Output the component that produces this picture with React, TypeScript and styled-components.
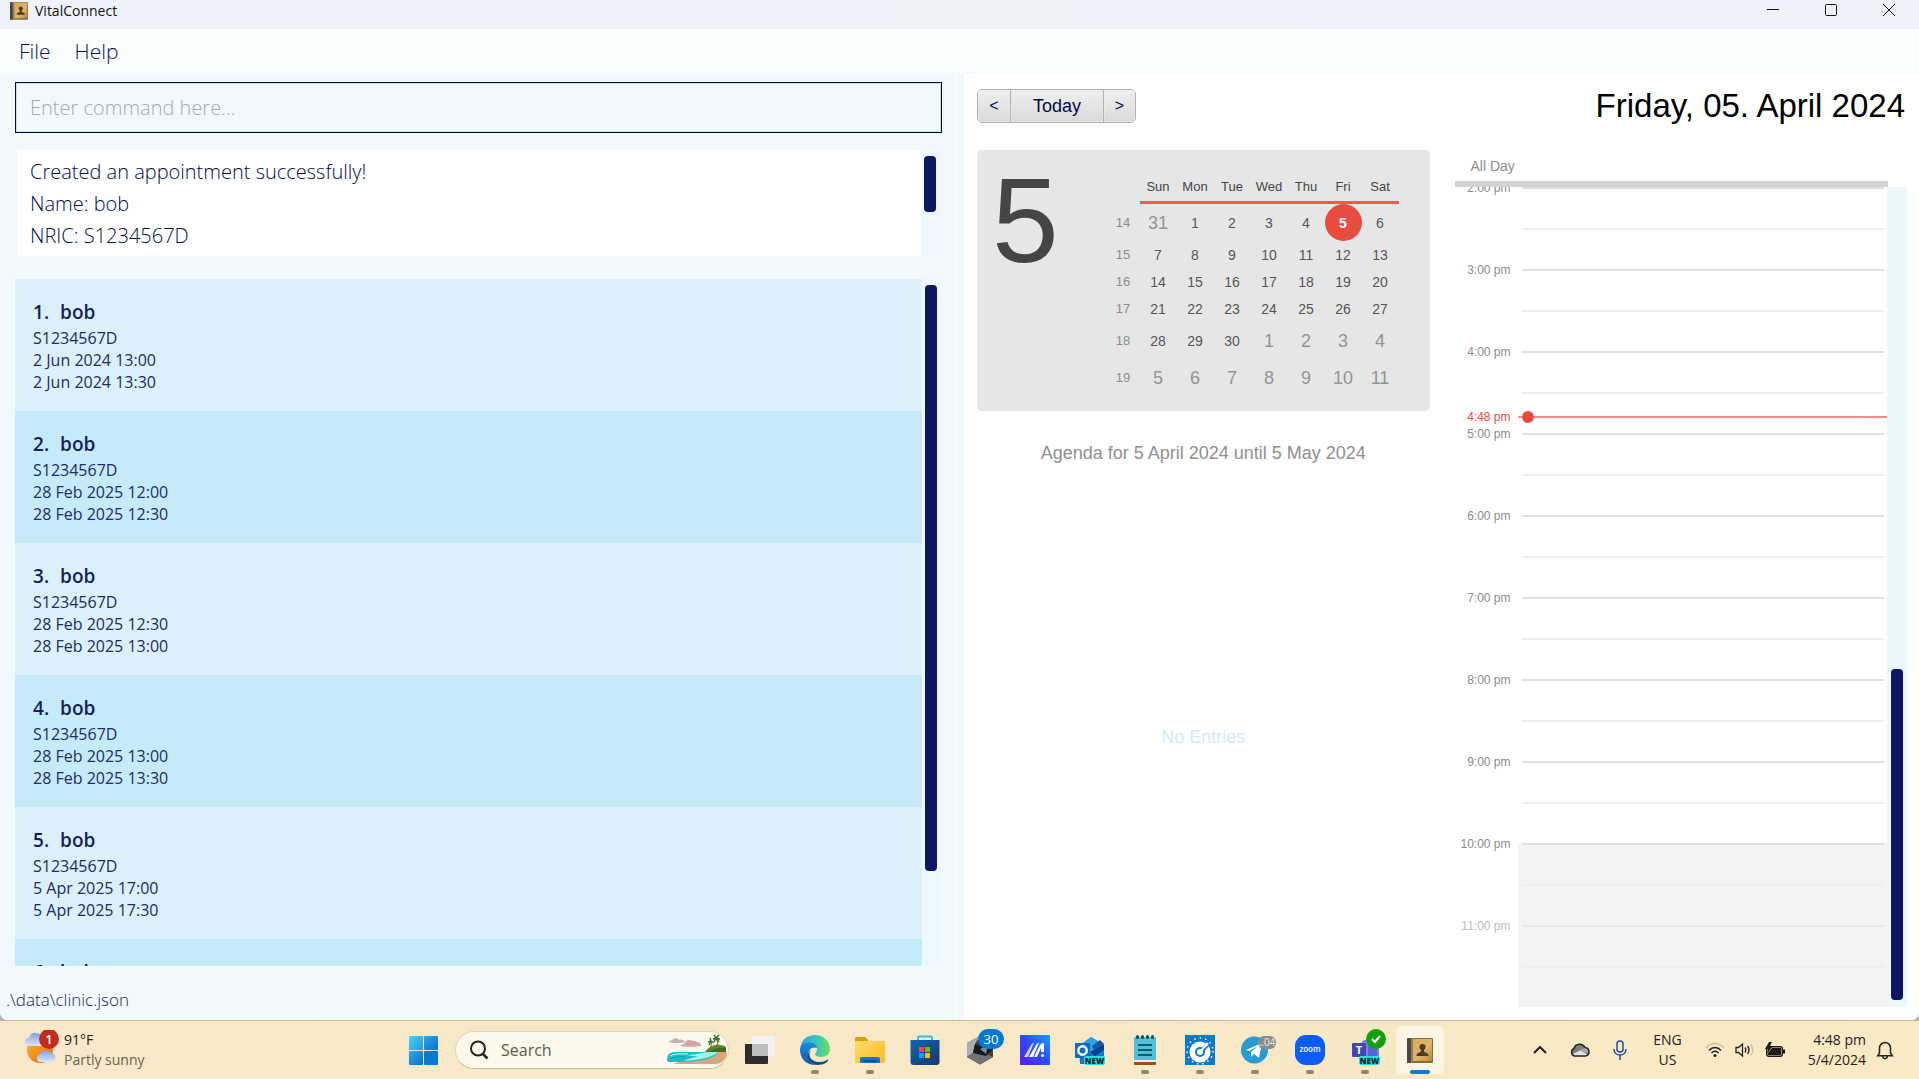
import React from "react";
import styled, { createGlobalStyle, css } from "styled-components";

const UI = `"Open Sans", "Noto Sans", sans-serif`;
const ARIAL = `"Liberation Sans", Arial, sans-serif`;

const GlobalStyle = createGlobalStyle`
  *, *::before, *::after { box-sizing: border-box; }
  body { margin: 0; font-family: ${UI}; }
  button, input { font: inherit; }
`;

/* ---------- desktop and window ---------- */

const Desktop = styled.div`
  height: 100vh;
  display: flex;
  flex-direction: column;
  overflow: hidden;
  background: #b4b4b4;
`;

const Window = styled.div`
  flex: 1;
  min-height: 0;
  display: flex;
  flex-direction: column;
  overflow: hidden;
  border-radius: 0 0 8px 8px;
  background: #ffffff;
`;

const TitleBar = styled.header`
  height: 29px;
  flex: none;
  display: flex;
  align-items: flex-start;
  padding: 0 1px 0 10px;
  background: linear-gradient(90deg, #edf3f8 0%, #eef3f8 55%, #eef2fb 75%);
`;

const WindowTitle = styled.h1`
  margin: 0 auto 0 7px;
  font-size: 14px;
  line-height: 22px;
  font-weight: 400;
  color: #111111;
`;

const TitleIcon = styled.svg`
  width: 18px;
  height: 18px;
  margin-top: 2px;
`;

const CaptionButton = styled.button`
  width: 58px;
  height: 29px;
  padding: 0 0 9px;
  border: 0;
  background: none;
  display: flex;
  align-items: center;
  justify-content: center;
`;

const MenuBar = styled.nav`
  height: 44px;
  flex: none;
  display: flex;
  align-items: center;
  gap: 24px;
  padding: 0 19px;
  background: #f9fdfe;
`;

const MenuItem = styled.button`
  padding: 0;
  border: 0;
  background: none;
  font-size: 21px;
  line-height: 28px;
  font-weight: 300;
  color: #0b1160;
`;

const SplitPane = styled.main`
  flex: 1;
  min-height: 0;
  display: grid;
  grid-template-columns: minmax(0, 1fr) 9px minmax(0, 1fr);
  grid-template-rows: minmax(0, 1fr);
`;

const Divider = styled.div`
  background: #f0f8fe;
  border-left: 2px solid #fafdff;
`;

/* ---------- scroll bars ---------- */

const ScrollTrack = styled.div<{ $width: number; $tint: string }>`
  width: ${(p) => p.$width}px;
  flex: none;
  display: flex;
  flex-direction: column;
  align-items: center;
  padding: 6px 0 7px;
  background: ${(p) => p.$tint};
`;

const ScrollThumb = styled.div<{ $share: number; $end?: boolean }>`
  width: 12px;
  height: ${(p) => p.$share}%;
  margin-top: ${(p) => (p.$end ? "auto" : "0")};
  border-radius: 4px;
  background: #0b1762;
`;

/* ---------- left pane ---------- */

const CommandPane = styled.section`
  display: flex;
  flex-direction: column;
  padding: 9px 13px 0 15px;
  background: #f1f9fc;
`;

const CommandInput = styled.input`
  width: 100%;
  height: 51px;
  flex: none;
  padding: 0 14px;
  border: 1px solid #000b4f;
  border-radius: 0;
  outline: 0;
  background: #f0f9fd;
  box-shadow: inset 0 0 0 1px #cfdae8;
  font-size: 20px;
  font-weight: 300;
  color: #000b4f;
  &::placeholder { color: #a9a9a9; opacity: 1; }
`;

const ResultBox = styled.div`
  height: 106px;
  flex: none;
  display: flex;
  margin: 17px 4px 23px 2px;
`;

const ResultText = styled.div`
  flex: 1;
  padding: 6px 13px 4px;
  background: #ffffff;
  font-size: 20px;
  line-height: 32px;
  font-weight: 300;
  color: #000b4f;
`;

const ResultLine = styled.div``;

const ListBox = styled.div`
  flex: 1;
  min-height: 0;
  display: flex;
  margin-right: 2px;
`;

const AppointmentList = styled.ul`
  flex: 1;
  min-width: 0;
  margin: 0;
  padding: 0;
  list-style: none;
  overflow: hidden;
`;

const AppointmentCard = styled.li<{ $alt: boolean }>`
  padding: 19px 18px 18px;
  font-size: 16px;
  line-height: 22px;
  color: #232a68;
  background: ${(p) => (p.$alt ? "#c5eafa" : "#dcf0fa")};
`;

const AppointmentName = styled.h2`
  display: flex;
  gap: 11px;
  margin: 0 0 1px;
  font-size: 19px;
  line-height: 28px;
  font-weight: 600;
  color: #161c60;
`;

const StatusBar = styled.footer`
  flex: none;
  padding: 22px 0 8px;
  margin-left: -9px;
  font-size: 17px;
  line-height: 24px;
  font-weight: 300;
  color: #161c60;
`;

/* ---------- calendar pane ---------- */

const CalendarPane = styled.section`
  display: flex;
  flex-direction: column;
  padding: 15px 12px 13px 13px;
  background: #ffffff;
  border-top: 1px solid #f1f9fc;
  font-family: ${ARIAL};
`;

const CalendarBar = styled.div`
  flex: none;
  display: flex;
  align-items: center;
  justify-content: space-between;
  height: 34px;
  margin-bottom: 27px;
  padding-right: 2px;
`;

const ButtonGroup = styled.div`
  display: flex;
  height: 34px;
  border: 1px solid #b1b1b1;
  border-radius: 5px;
  overflow: hidden;
`;

const NavButton = styled.button<{ $wide?: boolean }>`
  width: ${(p) => (p.$wide ? 93 : 32)}px;
  padding: 0;
  border: 0;
  background: linear-gradient(#f0f0f0, #d9d9d9);
  box-shadow: inset 0 0 0 1px #ebebeb80;
  font-family: ${ARIAL};
  font-size: ${(p) => (p.$wide ? 18 : 16)}px;
  color: #000b4f;
  & + & { border-left: 1px solid #b1b1b1; }
`;

const DateHeading = styled.h2`
  margin: 0;
  font-size: 33px;
  line-height: 34px;
  font-weight: 400;
  color: #000000;
`;

const CalendarBody = styled.div`
  flex: 1;
  min-height: 0;
  display: grid;
  grid-template-columns: 1fr 1fr;
  gap: 25px;
`;

const AgendaColumn = styled.div`
  display: flex;
  flex-direction: column;
  min-height: 0;
`;

const MonthCard = styled.div`
  flex: none;
  display: flex;
  justify-content: space-between;
  align-items: flex-start;
  padding: 0 31px 15px 15px;
  border-radius: 5px;
  background: #e6e6e6;
`;

const BigDay = styled.div`
  margin-top: 10px;
  font-size: 120px;
  line-height: 120px;
  color: #454545;
`;

const MonthTable = styled.table`
  margin-top: 23px;
  border-collapse: separate;
  border-spacing: 0;
  table-layout: fixed;
  width: 292px;
`;

const WeekdayHead = styled.th`
  width: 37px;
  height: 31px;
  padding: 0;
  border-bottom: 3px solid #ee5a4b;
  font-size: 13px;
  line-height: 28px;
  font-weight: 400;
  color: #454545;
`;

const WeekHead = styled.td`
  width: 33px;
  padding: 0;
`;

const WeekRow = styled.tr<{ $tall: boolean }>`
  height: ${(p) => (p.$tall ? 37 : 27)}px;
`;

const WeekNumber = styled.th`
  padding: 0;
  font-size: 13px;
  font-weight: 400;
  color: #8c8c8c;
`;

const DayCell = styled.td<{ $kind: "in" | "out" | "today" }>`
  padding: 0;
  text-align: center;
  font-size: 14px;
  line-height: 20px;
  color: #555555;
  ${(p) => p.$kind === "out" && css`font-size: 18px; color: #949494;`}
  ${(p) =>
    p.$kind === "today" &&
    css`
      border-radius: 50%;
      background: #e94c3d;
      color: #ffffff;
      font-weight: 700;
    `}
`;

const AgendaTitle = styled.h3`
  margin: 28px 0 0;
  flex: none;
  font-size: 18px;
  line-height: 28px;
  font-weight: 400;
  text-align: center;
  color: #8f8f8f;
`;

const EmptyAgenda = styled.div`
  flex: 1;
  display: flex;
  align-items: center;
  justify-content: center;
  font-size: 18px;
  color: #ceebfa;
`;

const DayView = styled.div`
  display: flex;
  flex-direction: column;
  min-height: 0;
`;

const AllDay = styled.div`
  flex: none;
  height: 37px;
  margin-right: 19px;
  padding: 4px 16px 0;
  border-bottom: 6px solid #d3d3d3;
  font-size: 14px;
  line-height: 24px;
  color: #8c8c8c;
`;

const DayScroll = styled.div`
  flex: 1;
  min-height: 0;
  display: flex;
  overflow: hidden;
`;

const Hours = styled.div`
  position: relative;
  flex: 1;
`;

const HourRow = styled.div`
  display: grid;
  grid-template-columns: 63px 1fr;
  height: 82px;
`;

const HourLabel = styled.div<{ $faded?: boolean }>`
  margin-top: -7px;
  padding-right: 7px;
  text-align: right;
  font-size: 12px;
  line-height: 16px;
  color: ${(p) => (p.$faded ? "#bcbcbc" : "#8a8a8a")};
`;

const HourSlots = styled.div<{ $closed: boolean }>`
  display: flex;
  flex-direction: column;
  padding: 0 3px 0 4px;
  background: ${(p) => (p.$closed ? "#f3f3f3" : "#ffffff")};
`;

const HalfHour = styled.div<{ $line: string }>`
  height: 41px;
  border-top: 2px solid ${(p) => p.$line};
`;

const NowMarker = styled.div`
  position: absolute;
  left: 0;
  right: 0;
  display: grid;
  grid-template-columns: 63px 1fr;
  align-items: center;
  height: 16px;
  margin-top: -8px;
`;

const NowLabel = styled.span`
  padding-right: 7px;
  text-align: right;
  font-size: 12px;
  line-height: 16px;
  color: #e94c3d;
`;

const NowLine = styled.span`
  display: flex;
  align-items: center;
  height: 2px;
  padding-left: 4px;
  background: #f38d86;
  &::before {
    content: "";
    width: 12px;
    height: 12px;
    border-radius: 50%;
    background: #e94c3d;
  }
`;

/* ---------- taskbar ---------- */

const Taskbar = styled.footer`
  flex: none;
  height: 59px;
  display: flex;
  align-items: stretch;
  border-top: 1px solid #c3b99f;
  background: linear-gradient(90deg, #f8e8c9, #f7e8c7 50%, #f9eac4);
`;

const Weather = styled.button`
  width: 400px;
  flex: none;
  display: flex;
  align-items: center;
  gap: 4px;
  padding: 0 0 0 22px;
  border: 0;
  background: none;
  text-align: left;
`;

const WeatherText = styled.span`
  display: flex;
  flex-direction: column;
  font-size: 14px;
  line-height: 20px;
  color: #222222;
`;

const Muted = styled.span`
  color: #6b6350;
`;

const Apps = styled.div`
  display: flex;
  align-items: center;
  gap: 7px;
`;

const AppButton = styled.button<{ $active?: boolean }>`
  width: 48px;
  height: 48px;
  padding: 0;
  border: 0;
  border-radius: 5px;
  background: ${(p) => (p.$active ? "#fdf5e3" : "none")};
  svg { display: block; overflow: visible; }
`;

const SearchBox = styled.label`
  width: 274px;
  height: 38px;
  display: flex;
  align-items: center;
  padding-left: 13px;
  border: 1px solid #e2d5b4;
  border-bottom-color: #c9bd9d;
  border-radius: 19px;
  background: #fdf8ec;
`;

const SearchInput = styled.input`
  flex: 1;
  min-width: 0;
  margin-left: 12px;
  padding: 0;
  border: 0;
  outline: 0;
  background: none;
  font-size: 16px;
  color: #555555;
  &::placeholder { color: #5c5a55; opacity: 1; }
`;

const Tray = styled.div`
  margin-left: auto;
  display: flex;
  align-items: center;
  padding-right: 25px;
`;

const TrayButton = styled.button<{ $gap: number }>`
  display: flex;
  margin: 0 0 0 ${(p) => p.$gap}px;
  padding: 0;
  border: 0;
  background: none;
  color: #1f1f1f;
`;

const TrayText = styled.button<{ $gap: number; $align: "center" | "right" }>`
  display: flex;
  flex-direction: column;
  margin: 0 0 0 ${(p) => p.$gap}px;
  padding: 0;
  border: 0;
  background: none;
  font-size: 14px;
  line-height: 20px;
  text-align: ${(p) => p.$align};
  align-items: ${(p) => (p.$align === "right" ? "flex-end" : "center")};
  color: #222222;
`;

/* ---------- icons ---------- */

const BookArt = () => (
  <>
    <rect x="0" y="0" width="26" height="25" rx="1" fill="#8a6a3a" />
    <rect x="6" y="1" width="19" height="22" fill="url(#bookCover)" />
    <rect x="0" y="0" width="4" height="25" rx="1" fill="#4c4642" />
    <rect x="4" y="0" width="2" height="25" fill="#8c7d6c" />
    <circle cx="15.5" cy="9" r="3.1" fill="#4d3c22" />
    <path d="M14 11h3v2.5c1 1 4.5 1 4.5 4.500h-12c0-3.500 3.500-3.500 4.500-4.500z" fill="#4d3c22" />
    <defs>
      <linearGradient id="bookCover" x1="0" y1="0" x2="1" y2="1">
        <stop offset="0" stopColor="#d9a95c" />
        <stop offset=".55" stopColor="#e0b46a" />
        <stop offset="1" stopColor="#bb8540" />
      </linearGradient>
    </defs>
  </>
);

const Running = () => <rect x="20" y="44" width="8" height="4" rx="2" fill="#8e866f" />;

const Art = ({ children }: { children: React.ReactNode }) => (
  <svg width="48" height="48" viewBox="0 0 48 48" aria-hidden="true">
    {children}
  </svg>
);

const WeatherIcon = () => (
  <svg width="38" height="40" viewBox="0 0 38 40" aria-hidden="true">
    <defs>
      <linearGradient id="sun" x1="0" y1="0" x2="1" y2="1">
        <stop offset="0" stopColor="#fbb829" />
        <stop offset="1" stopColor="#ee6414" />
      </linearGradient>
      <linearGradient id="wcloud" x1="0" y1="0" x2="0" y2="1">
        <stop offset="0" stopColor="#7f9fe0" />
        <stop offset="1" stopColor="#dbe8fb" />
      </linearGradient>
    </defs>
    <circle cx="18" cy="20" r="13" fill="url(#sun)" />
    <path d="M7 16a4 4 0 0 1 0-8 6.500 6.500 0 0 1 12-2 5 5 0 0 1 2 10z" fill="url(#wcloud)" />
    <path d="M19 32a4 4 0 0 1 0-8 5.500 5.500 0 0 1 10-1 4.300 4.300 0 0 1 0 9z" fill="url(#wcloud)" />
    <circle cx="27" cy="9" r="10" fill="#c42b1c" />
    <text x="27" y="14" textAnchor="middle" fontSize="13" fontWeight="600" fill="#fff">1</text>
  </svg>
);

const StartIcon = () => (
  <Art>
    <defs>
      <linearGradient id="win" x1="0" y1="0" x2="1" y2="1" >
        <stop offset="0" stopColor="#4fd0fb" />
        <stop offset="1" stopColor="#1c98e2" />
      </linearGradient>
      <linearGradient id="win2" x1="0" y1="0" x2="1" y2="1">
        <stop offset="0" stopColor="#2fa8ea" />
        <stop offset="1" stopColor="#0a6fcd" />
      </linearGradient>
    </defs>
    <rect x="9" y="10" width="14" height="14" rx="1" fill="url(#win)" />
    <rect x="24" y="10" width="14" height="14" rx="1" fill="url(#win2)" />
    <rect x="9" y="25" width="14" height="14" rx="1" fill="url(#win2)" />
    <rect x="24" y="25" width="14" height="14" rx="1" fill="#0b78d3" />
  </Art>
);

const BeachArt = () => (
  <svg width="62" height="32" viewBox="0 0 62 32" aria-hidden="true">
    <path d="M3 8c0-2 4-1 4-3 2-1.500 5-1 6 1 2-1 5 0 6 2z" fill="#cfaeb0" />
    <path d="M14 12c1-2 4-1 5-3 1-3 5-4 7-2 3-1 4 1 5 1 2 0 4 1 4 4z" fill="#d3a3a0" />
    <path d="M3 8h16c-3 1.500-14 1.500-16 0zM14 12h21c-3 1-18 1-21 0z" fill="#a9b2d6" />
    <path d="M7 30h42c8 0 12-6 12-12H40z" fill="#d7a67c" />
    <path d="M1 26c0-6 3-8 9-8h42c-3 7-18 10-42 10-5 0-9 1-9-2z" fill="#1cc0c4" />
    <path d="M22 21c10 0 14-3 22-3h8c-6 6-20 8-34 9 5-3 9-3 14-5-4 0-7 0-10-1z" fill="#a8eeec" />
    <path d="M4 22c5-3 12-2 18-2" stroke="#c9f7f4" fill="none" />
    <path d="M4 25c5-3 12-2 16-2" stroke="#0b9ba8" fill="none" />
    <path d="M39 18c4-6 10-8 15-7 3 0 5 1 6 2v5z" fill="#5c8a24" />
    <path d="M44 17c4-3 9-4 16-3v4H40z" fill="#3f6d1c" />
    <path d="M45 13c0-3 1-5 0-6M51 12c1-4 0-6-1-8" stroke="#7b5a2c" fill="none" />
    <path d="M42 8l3-1 3 2M43 11l2-4-1-3M47 5l3-1 4 1M48 8l2-4 3 4M50 4l-2-3M50 4l3-3" fill="none" stroke="#2f7a2a" strokeWidth="1.500" />
  </svg>
);

const TaskViewIcon = () => (
  <Art>
    <rect x="9" y="18" width="23" height="20" rx="1" fill="#2e2d2b" />
    <rect x="16" y="10" width="23" height="20" rx="1" fill="#f2f2f2" />
    <path d="M16 18h16v12H17a1 1 0 0 1-1-1z" fill="#bdbdbd" />
  </Art>
);

const EdgeIcon = () => (
  <Art>
    <defs>
      <linearGradient id="edgeA" x1="0" y1="0" x2="1" y2="0">
        <stop offset="0" stopColor="#2aa3e6" />
        <stop offset=".5" stopColor="#35c1c8" />
        <stop offset="1" stopColor="#6de05a" />
      </linearGradient>
      <linearGradient id="edgeB" x1="0" y1="0" x2="0" y2="1">
        <stop offset="0" stopColor="#1b8fe0" />
        <stop offset="1" stopColor="#0c59a4" />
      </linearGradient>
    </defs>
    <path d="M9.500 22C10 14 16 9 24 9c9 0 15 6.500 15 14 0 5-4 8-9 8-4 0-6-1.500-6-3 0-1 2-2 2-5 0-4-4-7-8-7-4 0-7 2-8.500 6z" fill="url(#edgeA)" />
    <path d="M9 24c0-5 4-8 9-8 4 0 8 3 8 6-5-2-9 2-9 7 0 6 5 10 10 10-10 1-18-5-18-15z" fill="url(#edgeB)" />
    <path d="M20 24c-4 5 0 12 8 12 4 0 6-1 8-2 1-.500 1.500.500 1 1-3 3-7 4-11 4-6-1-10-5-9-10 0-2 1-4 3-5z" fill="#11508f" />
    <Running />
  </Art>
);

const FolderIcon = () => (
  <Art>
    <path d="M9 13a2 2 0 0 1 2-2h8l3 3v6H9z" fill="#e09c08" />
    <rect x="9" y="15" width="30" height="22" rx="1" fill="url(#fold)" />
    <path d="M14 37v-4a2 2 0 0 1 2-2h16a2 2 0 0 1 2 2v4z" fill="#1673c8" />
    <rect x="17" y="34" width="14" height="2" rx="1" fill="#0b4f96" />
    <defs>
      <linearGradient id="fold" x1="0" y1="0" x2="1" y2="1">
        <stop offset="0" stopColor="#ffdc6c" />
        <stop offset="1" stopColor="#fbbc22" />
      </linearGradient>
    </defs>
    <Running />
  </Art>
);

const StoreIcon = () => (
  <Art>
    <defs>
      <linearGradient id="store" x1="0" y1="0" x2="1" y2="1">
        <stop offset="0" stopColor="#0c68b6" />
        <stop offset="1" stopColor="#1b3768" />
      </linearGradient>
    </defs>
    <path d="M17 15v-3.500a1 1 0 0 1 1-1h12a1 1 0 0 1 1 1V15" fill="none" stroke="#33bdf0" strokeWidth="2" />
    <path d="M9.500 14h29v22a3 3 0 0 1-3 3h-23a3 3 0 0 1-3-3z" fill="url(#store)" />
    <rect x="18" y="21" width="5" height="5" fill="#f25022" />
    <rect x="24" y="21" width="5" height="5" fill="#7fba00" />
    <rect x="18" y="27" width="5" height="5" fill="#00a4ef" />
    <rect x="24" y="27" width="5" height="5" fill="#ffb900" />
  </Art>
);

const HexIcon = () => (
  <Art>
    <path d="M24 10l13 7v14l-13 7.500L11 31V17z" fill="#3c3f44" />
    <path d="M24 10L11 17v14l6-4 2-9z" fill="#a9adb3" />
    <path d="M11 31l6-4 13 1 7 3-13 7.500z" fill="#6f7378" />
    <path d="M17 27l2-9 9 4 9-5v6l-7 7z" fill="#17191c" />
    <path d="M24 23l8-4-2 9z" fill="#85898f" />
    <rect x="22" y="3" width="26" height="20" rx="10" fill="#0078d4" />
    <text x="35" y="18" textAnchor="middle" fontSize="13" fill="#fff">30</text>
  </Art>
);

const ArmouryIcon = () => (
  <Art>
    <defs>
      <linearGradient id="arm" x1="0" y1="1" x2="1" y2="0">
        <stop offset="0" stopColor="#5a1fe8" />
        <stop offset=".5" stopColor="#2b4bff" />
        <stop offset="1" stopColor="#1f9bff" />
      </linearGradient>
    </defs>
    <rect x="9" y="9" width="30" height="30" fill="url(#arm)" />
    <path d="M13 31l7-12q1-2 3-2l-6 14z" fill="#c8d2ff" />
    <path d="M18 31l7-12q1-2 3-2l-6 14z" fill="#ffffff" />
    <path d="M23 31l6-12q1-2 4-2v9h-3v-4l-4 9z" fill="#ffffff" />
    <circle cx="31.500" cy="29.500" r="1.500" fill="#fff" />
  </Art>
);

const OutlookIcon = () => (
  <Art>
    <path d="M13 20l12-9 13 8v18a1 1 0 0 1-1 1H14z" fill="#1976d2" />
    <path d="M25 11l13 8-13 8-12-7z" fill="#2f9fe8" />
    <path d="M24 26l14-8v6l-9 6z" fill="#0b3f8f" />
    <path d="M26 20l8-6 4 4-10 6z" fill="#1256a8" />
    <rect x="9" y="17" width="15" height="15" rx="1" fill="#0f6cbd" />
    <circle cx="16.500" cy="24.500" r="4.200" fill="none" stroke="#fff" strokeWidth="2.500" />
    <rect x="18" y="30" width="21" height="9" rx="2" fill="#1fe3df" />
    <text x="28.500" y="37.500" textAnchor="middle" fontSize="8" fontWeight="800" fill="#0b1b2b">NEW</text>
  </Art>
);

const NotepadIcon = () => (
  <Art>
    <rect x="13" y="35" width="22" height="4" rx="1" fill="#9a4f14" />
    <rect x="13" y="11" width="22" height="25" rx="1" fill="#4fc0d8" />
    <rect x="13" y="34" width="22" height="2" fill="#f3efe4" />
    <path d="M17 19h14M17 24h14M17 29h14" stroke="#0c5871" strokeWidth="2" />
    {[15, 20, 25, 30].map((x) => (
      <rect key={x} x={x} y="9" width="3" height="4" rx="1.500" fill="#17505f" />
    ))}
    <Running />
  </Art>
);

const GaugeIcon = () => (
  <Art>
    <rect x="9" y="9" width="30" height="30" fill="#0a78d4" />
    <circle cx="24" cy="25" r="13" fill="none" stroke="#fff" strokeWidth="1.500" strokeDasharray="1.500 4" />
    <circle cx="24" cy="26" r="10.500" fill="#ffffff" />
    <circle cx="24" cy="26" r="5" fill="#0a78d4" />
    <circle cx="24" cy="26" r="3" fill="#ffffff" />
    <path d="M27 24l4-5" stroke="#0a78d4" strokeWidth="4" />
    <path d="M24 26l8-9" stroke="#ffffff" strokeWidth="2" />
    <Running />
  </Art>
);

const TelegramIcon = () => (
  <Art>
    <circle cx="23.500" cy="24" r="13.500" fill="#2a9bd2" />
    <path d="M15 24l16-7-3 15-5-4-3 3v-5l7-6-9 5z" fill="#ffffff" />
    <rect x="27" y="10" width="18" height="13" rx="6" fill="#8b8b8b" />
    <text x="36" y="20" textAnchor="middle" fontSize="10" fill="#eeeeee">..04</text>
    <Running />
  </Art>
);

const ZoomIcon = () => (
  <Art>
    <rect x="9" y="9" width="30" height="30" rx="11" fill="#0b5cff" />
    <text x="24" y="26" textAnchor="middle" fontSize="8" fontWeight="600" fill="#ffffff">zoom</text>
    <Running />
  </Art>
);

const TeamsIcon = () => (
  <Art>
    <rect x="21" y="14" width="17" height="18" rx="3" fill="#7b83eb" />
    <rect x="27" y="17" width="9" height="15" rx="3" fill="#5b62cf" />
    <rect x="11" y="17" width="14" height="14" rx="1" fill="#4048b4" />
    <text x="18" y="28" textAnchor="middle" fontSize="11" fontWeight="700" fill="#ffffff">T</text>
    <rect x="18" y="30" width="21" height="9" rx="2" fill="#1fe3df" />
    <text x="28.500" y="37.500" textAnchor="middle" fontSize="8" fontWeight="800" fill="#0b1b2b">NEW</text>
    <circle cx="35" cy="13" r="10" fill="#13a10e" />
    <path d="M31 13l3 3 5-6" fill="none" stroke="#ffffff" strokeWidth="2" />
    <Running />
  </Art>
);

const VitalIcon = () => (
  <Art>
    <g transform="translate(11 12)">
      <BookArt />
    </g>
    <rect x="14" y="44" width="20" height="4" rx="2" fill="#0a78d4" />
  </Art>
);

/* ---------- data ---------- */

type Appointment = { name: string; details: string[] };

const appointments: Appointment[] = [
  { name: "bob", details: ["S1234567D", "2 Jun 2024 13:00", "2 Jun 2024 13:30"] },
  { name: "bob", details: ["S1234567D", "28 Feb 2025 12:00", "28 Feb 2025 12:30"] },
  { name: "bob", details: ["S1234567D", "28 Feb 2025 12:30", "28 Feb 2025 13:00"] },
  { name: "bob", details: ["S1234567D", "28 Feb 2025 13:00", "28 Feb 2025 13:30"] },
  { name: "bob", details: ["S1234567D", "5 Apr 2025 17:00", "5 Apr 2025 17:30"] },
  { name: "bob", details: [] },
];

const weekdays = ["Sun", "Mon", "Tue", "Wed", "Thu", "Fri", "Sat"];
const firstWeek = 14;
const today = 5;

/* The grid starts on 31 March; April has 30 days. */
const weeks = Array.from({ length: 6 }, (_, w) =>
  Array.from({ length: 7 }, (_, d) => {
    const n = w * 7 + d;
    if (n < 1) return { day: 31, out: true };
    if (n > 30) return { day: n - 30, out: true };
    return { day: n, out: false };
  })
);

const hours = [2, 3, 4, 5, 6, 7, 8, 9, 10, 11];
const HOUR_HEIGHT = 82;
const nowOffset = Math.round((2 + 48 / 60) * HOUR_HEIGHT);

const taskbarApps: [string, () => React.JSX.Element][] = [
  ["Task view", TaskViewIcon],
  ["Edge", EdgeIcon],
  ["File Explorer", FolderIcon],
  ["Microsoft Store", StoreIcon],
  ["Notifications hub", HexIcon],
  ["MyASUS", ArmouryIcon],
  ["Outlook", OutlookIcon],
  ["Notepad", NotepadIcon],
  ["Performance", GaugeIcon],
  ["Telegram", TelegramIcon],
  ["Zoom", ZoomIcon],
  ["Teams", TeamsIcon],
];

/* ---------- views ---------- */

const MonthView = () => (
  <MonthCard>
    <BigDay>{today}</BigDay>
    <MonthTable>
      <thead>
        <tr>
          <WeekHead />
          {weekdays.map((d) => (
            <WeekdayHead key={d} scope="col">{d}</WeekdayHead>
          ))}
        </tr>
      </thead>
      <tbody>
        {weeks.map((week, i) => (
          <WeekRow key={i} $tall={week.some((d) => d.out)}>
            <WeekNumber scope="row">{firstWeek + i}</WeekNumber>
            {week.map((d) => (
              <DayCell key={d.day} $kind={d.out ? "out" : d.day === today ? "today" : "in"}>
                {d.day}
              </DayCell>
            ))}
          </WeekRow>
        ))}
      </tbody>
    </MonthTable>
  </MonthCard>
);

const DaySchedule = () => (
  <DayView>
    <AllDay>All Day</AllDay>
    <DayScroll>
      <Hours>
        {hours.map((h) => {
          const closed = h >= 10;
          return (
            <HourRow key={h}>
              <HourLabel $faded={h > 10}>{h}:00 pm</HourLabel>
              <HourSlots $closed={closed}>
                <HalfHour $line={h > 10 ? "#e8e8e8" : "#e0e0e0"} />
                <HalfHour $line={closed ? "#eeeeee" : "#ededed"} />
              </HourSlots>
            </HourRow>
          );
        })}
        <NowMarker style={{ top: nowOffset }}>
          <NowLabel>4:48 pm</NowLabel>
          <NowLine />
        </NowMarker>
      </Hours>
      <ScrollTrack $width={20} $tint="#eaf7fd">
        <ScrollThumb $share={41} $end />
      </ScrollTrack>
    </DayScroll>
  </DayView>
);

export default function App() {
  return (
    <>
      <GlobalStyle />
      <Desktop>
        <Window>
          <TitleBar>
            <TitleIcon viewBox="0 0 26 25" aria-hidden="true">
              <BookArt />
            </TitleIcon>
            <WindowTitle>VitalConnect</WindowTitle>
            <CaptionButton aria-label="Minimize">
              <svg width="12" height="12"><path d="M0 5.500h12" stroke="#111" /></svg>
            </CaptionButton>
            <CaptionButton aria-label="Maximize">
              <svg width="12" height="12"><rect x=".5" y=".5" width="11" height="11" rx="1" fill="none" stroke="#111" /></svg>
            </CaptionButton>
            <CaptionButton aria-label="Close">
              <svg width="12" height="12"><path d="M0 0l12 12M12 0L0 12" stroke="#111" /></svg>
            </CaptionButton>
          </TitleBar>
          <MenuBar>
            <MenuItem>File</MenuItem>
            <MenuItem>Help</MenuItem>
          </MenuBar>
          <SplitPane>
            <CommandPane>
              <CommandInput aria-label="Command" placeholder="Enter command here..." />
              <ResultBox>
                <ResultText role="status">
                  <ResultLine>Created an appointment successfully!</ResultLine>
                  <ResultLine>Name: bob</ResultLine>
                  <ResultLine>NRIC: S1234567D</ResultLine>
                </ResultText>
                <ScrollTrack $width={17} $tint="#edf8fe">
                  <ScrollThumb $share={60} />
                </ScrollTrack>
              </ResultBox>
              <ListBox>
                <AppointmentList>
                  {appointments.map((a, i) => (
                    <AppointmentCard key={i} $alt={i % 2 === 1}>
                      <AppointmentName>
                        <span>{i + 1}.</span>
                        <span>{a.name}</span>
                      </AppointmentName>
                      {a.details.map((line) => (
                        <div key={line}>{line}</div>
                      ))}
                    </AppointmentCard>
                  ))}
                </AppointmentList>
                <ScrollTrack $width={18} $tint="#edf8fe">
                  <ScrollThumb $share={87} />
                </ScrollTrack>
              </ListBox>
              <StatusBar>.\data\clinic.json</StatusBar>
            </CommandPane>
            <Divider />
            <CalendarPane>
              <CalendarBar>
                <ButtonGroup>
                  <NavButton aria-label="Previous day">&lt;</NavButton>
                  <NavButton $wide>Today</NavButton>
                  <NavButton aria-label="Next day">&gt;</NavButton>
                </ButtonGroup>
                <DateHeading>Friday, 05. April 2024</DateHeading>
              </CalendarBar>
              <CalendarBody>
                <AgendaColumn>
                  <MonthView />
                  <AgendaTitle>Agenda for 5 April 2024 until 5 May 2024</AgendaTitle>
                  <EmptyAgenda>No Entries</EmptyAgenda>
                </AgendaColumn>
                <DaySchedule />
              </CalendarBody>
            </CalendarPane>
          </SplitPane>
        </Window>
        <Taskbar>
          <Weather>
            <WeatherIcon />
            <WeatherText>
              <span>91°F</span>
              <Muted>Partly sunny</Muted>
            </WeatherText>
          </Weather>
          <Apps>
            <AppButton aria-label="Start"><StartIcon /></AppButton>
            <SearchBox>
              <svg width="20" height="20" viewBox="0 0 20 20" aria-hidden="true">
                <circle cx="9" cy="8.500" r="7" fill="none" stroke="#222" strokeWidth="2" />
                <path d="M14 14l4.500 4.500" stroke="#222" strokeWidth="2.500" />
              </svg>
              <SearchInput aria-label="Search" placeholder="Search" />
              <BeachArt />
            </SearchBox>
            {taskbarApps.map(([name, Icon]) => (
              <AppButton key={name} aria-label={name}><Icon /></AppButton>
            ))}
            <AppButton $active aria-label="VitalConnect"><VitalIcon /></AppButton>
          </Apps>
          <Tray>
            <TrayButton $gap={0} aria-label="Hidden icons">
              <svg width="14" height="8" viewBox="0 0 14 8"><path d="M1 7l6-6 6 6" fill="none" stroke="currentColor" strokeWidth="2" /></svg>
            </TrayButton>
            <TrayButton $gap={23} aria-label="OneDrive">
              <svg width="20" height="14" viewBox="0 0 20 14">
                <path d="M4.500 13a4 4 0 0 1-.500-7.500 6 6 0 0 1 11-1A4.300 4.300 0 0 1 15.500 13z" fill="#7d7d7d" />
                <path d="M9 8l6-3.500 3 1 .500 4-9.500 0z" fill="#a9a9a9" />
                <path d="M2 11.500l8-4 7.500 4-2 1.500h-11z" fill="#e3e3e3" />
                <path d="M4.500 13a4 4 0 0 1-.500-7.500 6 6 0 0 1 11-1A4.300 4.300 0 0 1 15.500 13z" fill="none" stroke="#222" strokeWidth="1.500" />
              </svg>
            </TrayButton>
            <TrayButton $gap={23} aria-label="Microphone">
              <svg width="14" height="20" viewBox="0 0 14 20" fill="none" stroke="#1f4f96" strokeWidth="1.500">
                <rect x="4" y="1" width="6" height="11" rx="3" />
                <path d="M1 9c0 8 12 8 12 0M7 15v5" />
              </svg>
            </TrayButton>
            <TrayText $gap={26} $align="center">
              <span>ENG</span>
              <span>US</span>
            </TrayText>
            <TrayButton $gap={23} aria-label="Wi-Fi">
              <svg width="20" height="16" viewBox="0 0 20 16" fill="none" stroke="#222" strokeWidth="1.500">
                <path d="M1 6c5-6 13-6 18 0" stroke="#cdc19f" />
                <path d="M4 8.500c3.500-4 8.500-4 12 0M6.500 11c2-2.300 5-2.300 7 0" />
                <circle cx="10" cy="13.500" r="1.500" fill="#222" stroke="none" />
              </svg>
            </TrayButton>
            <TrayButton $gap={10} aria-label="Volume">
              <svg width="20" height="16" viewBox="0 0 20 16" fill="none" stroke="#222" strokeWidth="1.300">
                <path d="M1 5.500h2.500L7.500 2v12l-4-3.500H1z" />
                <path d="M10 5.500q1.800 2.500 0 5M12.500 4q3 4 0 8" />
                <path d="M15.500 2q4.500 6 0 12" stroke="#cdc19f" />
              </svg>
            </TrayButton>
            <TrayButton $gap={10} aria-label="Battery">
              <svg width="20" height="16" viewBox="0 0 20 16">
                <rect x="1.700" y="4.700" width="15.600" height="9.600" rx="2" fill="none" stroke="#1b1b1b" strokeWidth="1.400" />
                <path d="M7 6h9v7H3v-2z" fill="#1b1b1b" />
                <path d="M18 7.500h2v4h-2zM4 0L0 7h3l-1 5 5-7H4.500L7 0z" fill="#1b1b1b" />
              </svg>
            </TrayButton>
            <TrayText $gap={23} $align="right">
              <span>4:48 pm</span>
              <span>5/4/2024</span>
            </TrayText>
            <TrayButton $gap={10} aria-label="Notifications">
              <svg width="18" height="19" viewBox="0 0 18 19" fill="none" stroke="#222" strokeWidth="1.500">
                <path d="M3.500 12V7a5.500 5.500 0 0 1 11 0v5l1.800 2.800H1.700zM6.500 15c.500 3.500 4.500 3.500 5 0" />
              </svg>
            </TrayButton>
          </Tray>
        </Taskbar>
      </Desktop>
    </>
  );
}
